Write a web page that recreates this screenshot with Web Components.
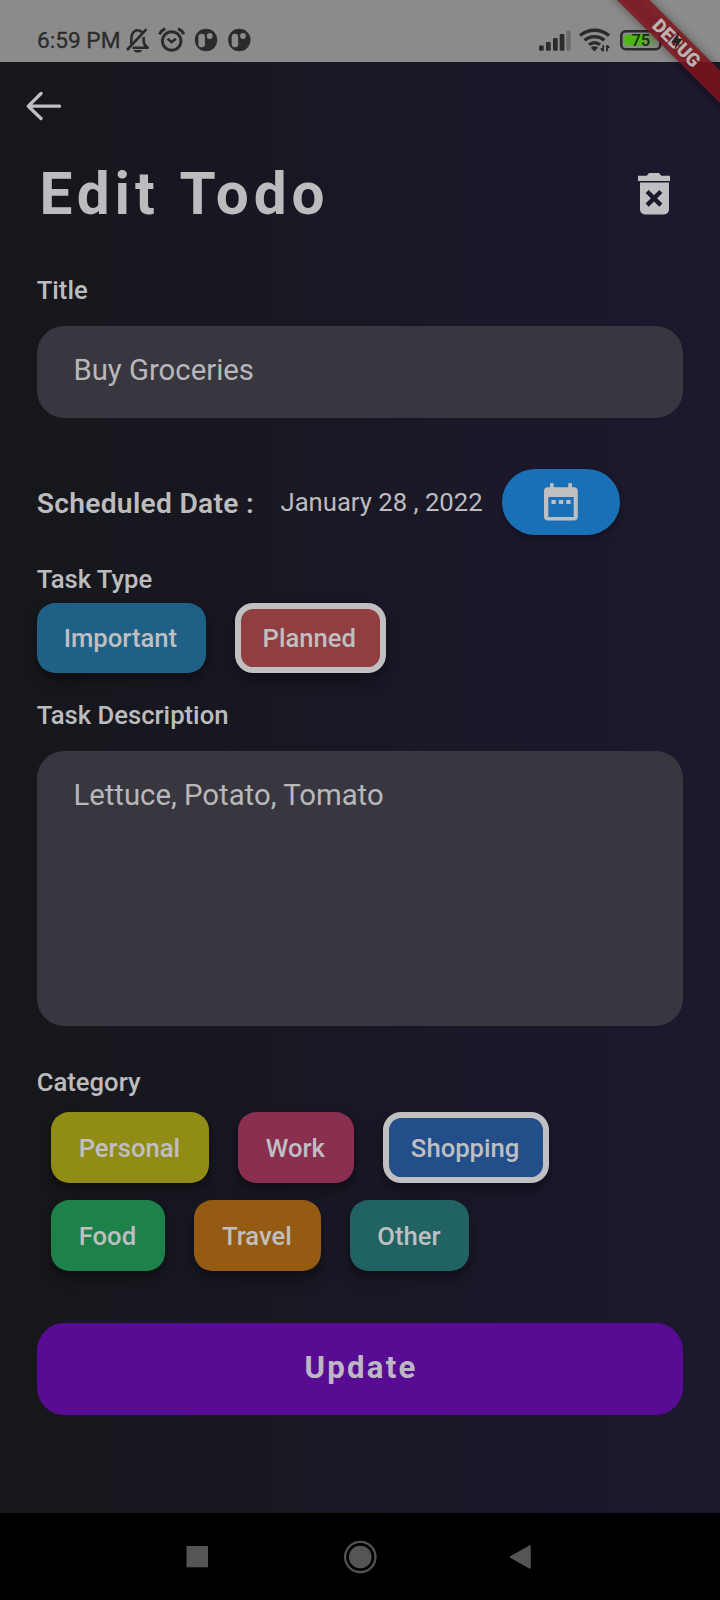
<!DOCTYPE html>
<html lang="en">
<head>
<meta charset="utf-8">
<title>Edit Todo</title>
<style>
html,body{margin:0;padding:0;background:#000}
body{width:720px;height:1600px;overflow:hidden;font-family:Roboto,"Liberation Sans",sans-serif;color:#bcbcbe}
</style>
</head>
<body>
<todo-screen></todo-screen>
<script>
function define(name, html) {
  const t = document.createElement('template');
  t.innerHTML = html;
  customElements.define(name, class extends HTMLElement {
    constructor() {
      super();
      this.attachShadow({mode: 'open'}).appendChild(t.content.cloneNode(true));
    }
  });
}

define('status-bar', `
<style>
:host{display:flex;height:62px;box-sizing:border-box;background:#8b8b8b;color:#2b2b2b;align-items:flex-start;padding:26px 0 0 37px}
.time{font-size:22.700px;line-height:30px;width:85px;white-space:nowrap;-webkit-text-stroke:.3px #2b2b2b}
svg{display:block;flex:none}
.left{margin-left:3px}
.right{margin-left:282px}
</style>
<span class="time">6:59 PM</span>
<svg class="left" width="127" height="28" viewBox="125 26 127 28" fill="none" stroke="#2b2b2b" stroke-width="2.600">
  <path d="M131.300 44V39c0-5 2.500-8.800 6.300-8.800c1.800 0 3.400.8 4.500 2.200M143.700 37v4.500c0 2.500 1.500 4.500 4 6.300h-15" stroke-linejoin="round"/>
  <path d="M127 50l19.500-20.800"/>
  <path d="M133.500 50h8.600c-.8 3.400-7.800 3.400-8.600 0z" fill="#2b2b2b" stroke="none"/>
  <circle cx="171.700" cy="41" r="9.300" stroke-width="2.900"/>
  <path d="M167.500 38.800l4.200 3.200 4.200-3.200" stroke-width="2.700"/>
  <path d="M159.300 34.200c1.500-2.600 3.400-4.400 6-5.500M184 34.200c-1.500-2.600-3.400-4.400-6-5.500" stroke-width="2.900"/>
  <g stroke="none">
    <circle cx="206" cy="40" r="11.200" fill="#2b2b2b"/>
    <rect x="198.400" y="33.700" width="6.500" height="13.600" rx="3" fill="#8b8b8b"/>
    <circle cx="209.700" cy="36" r="2.900" fill="#8b8b8b"/>
    <circle cx="239.300" cy="40" r="11.200" fill="#2b2b2b"/>
    <rect x="231.700" y="33.700" width="6.500" height="13.600" rx="3" fill="#8b8b8b"/>
    <circle cx="243" cy="36" r="2.900" fill="#8b8b8b"/>
  </g>
</svg>
<svg class="right" width="152" height="30" viewBox="534 26 152 30">
  <g fill="#2b2b2b">
    <rect x="539" y="45.500" width="4.700" height="5.300" rx="1"/>
    <rect x="546" y="42" width="4.700" height="8.800" rx="1"/>
    <rect x="553" y="38" width="4.700" height="12.800" rx="1"/>
    <rect x="559.700" y="34" width="4.700" height="16.800" rx="1"/>
    <rect x="566.300" y="30.700" width="4.400" height="20.100" rx="1" fill="#6c6c6c"/>
  </g>
  <g fill="none" stroke="#2b2b2b" stroke-width="3.300">
    <path d="M580 35.500c8.500-7 20.500-7 29 0"/>
    <path d="M584.600 40.300c6-4.900 13.800-4.900 19.800 0"/>
    <path d="M589 44.800c3.500-2.800 7.500-2.800 11 0"/>
  </g>
  <path d="M594.500 51.500l-3.700-3.800c2-1.900 5.300-1.900 7.300 0z" fill="#2b2b2b"/>
  <path d="M603.200 45v6.300M600.800 48.200l2.400 3M607 51.300v-6M609.300 48l-2.300-2.800" stroke="#2b2b2b" stroke-width="1.800" fill="none"/>
  <rect x="621.300" y="31.200" width="39" height="18" rx="4.500" fill="none" stroke="#2b2b2b" stroke-width="2.600"/>
  <path d="M626.500 34.500H644v11h-17.500a2 2 0 0 1-2-2v-7a2 2 0 0 1 2-2z" fill="#4db814"/>
  <path d="M644 34.500h11v11h-11z" fill="#76965f"/>
  <path d="M662.300 37c2 .5 2 6 0 6.500z" fill="#2b2b2b"/>
  <text x="640.800" y="46.200" text-anchor="middle" font-family="Roboto" font-weight="500" font-size="16.500" fill="#173006">75</text>
</svg>`);

define('debug-banner', `
<style>
:host{position:absolute;top:0;right:0;width:140px;height:140px;overflow:hidden;pointer-events:none}
svg{display:block}
</style>
<svg width="140" height="140" viewBox="580 0 140 140">
  <defs><filter id="b" x="-30%" y="-30%" width="160%" height="160%"><feGaussianBlur stdDeviation="5"/></filter></defs>
  <path d="M602-15L735 118V86L634-15z" fill="#000" opacity=".42" filter="url(#b)"/>
  <path d="M617 0L720 103V70.500L649.500 0z" fill="#84161d" fill-opacity=".82"/>
  <text transform="translate(676.800 42.800) rotate(45)" text-anchor="middle" y="6.800" font-family="Roboto" font-weight="900" font-size="18.700" textLength="59" fill="#b9b3b3">DEBUG</text>
  <path d="M679.500 31l-8.500 11.500 5 .8-1.800 7.200 8.300-11.500-4.500-.8z" fill="#2b2222"/>
</svg>`);

define('top-bar', `
<style>
:host{display:flex;height:88px;padding:27px 0 0 26px;box-sizing:border-box}
svg{display:block}
</style>
<svg width="38" height="34" viewBox="26 89 38 34" fill="none" stroke="#bfbfc1" stroke-width="3.300" stroke-linecap="round" stroke-linejoin="round">
  <path d="M59.500 106.200H28.300M41 93.500L28.300 106.200 41 118.500"/>
</svg>`);

define('page-heading', `
<style>
:host{display:flex;justify-content:space-between;height:86px;padding:8px 49px 0 39.500px;box-sizing:border-box}
h1{margin:0;padding-top:2px;font-size:58.500px;line-height:68px;font-weight:700;letter-spacing:4.900px;word-spacing:2px;white-space:nowrap;color:#bcbcbe}
svg{display:block;margin-top:14px}
</style>
<h1><slot></slot></h1>
<svg width="34" height="44" viewBox="637 172 34 44">
  <path d="M638 175.700h8.700l2.300-2.700h10l2.300 2.700h8.700v5.300h-32z" fill="#bfbfc1"/>
  <path d="M640 182.500h29v27a5 5 0 0 1-5 5h-19a5 5 0 0 1-5-5z" fill="#bfbfc1"/>
  <path d="M648.700 193l10.600 10.600M659.300 193l-10.600 10.600" stroke="#1b182b" stroke-width="4.400" stroke-linecap="square"/>
</svg>`);

define('field-label', `
<style>:host{display:block;font-size:25.670px;line-height:30px;font-weight:500;color:#bcbcbe;white-space:nowrap}</style><slot></slot>`);

define('text-field', `
<style>
:host{display:block;box-sizing:border-box;height:var(--h,91.500px);border-radius:27.500px;background:#383740;padding:26.500px 36.700px 0;font-size:29.330px;line-height:34px;color:#b8b8ba;white-space:nowrap}
</style><slot></slot>`);

define('date-row', `
<style>
:host{display:flex;align-items:center;height:66px}
.k{font-size:28.200px;font-weight:600;letter-spacing:.300px;width:243.800px;padding-top:2px}
.v{font-size:25.670px;width:222px}
.k,.v{white-space:nowrap}
button{all:unset;display:grid;place-items:center;width:117.500px;height:66px;border-radius:33px;background:#1a70b6;box-shadow:0 4px 6px rgba(0,0,0,.3)}
svg{display:block}
</style>
<span class="k"><slot name="label"></slot></span><span class="v"><slot></slot></span>
<button><svg width="34" height="38" viewBox="544 483 34 38">
  <path fill="#bfbfc1" fill-rule="evenodd" d="M550 483.300h3.700v4h14.600v-4h3.700v4h2a3.800 3.800 0 0 1 3.800 3.700v25.800a3.800 3.800 0 0 1-3.800 3.700h-26.200a3.800 3.800 0 0 1-3.800-3.700V491a3.800 3.800 0 0 1 3.800-3.700h2.200zM548.300 497v20h25.400v-20z"/>
  <path fill="#bfbfc1" d="M551.500 500h4.300v4h-4.300zM558.900 500h4.300v4h-4.300zM566.300 500h4.300v4h-4.300z"/>
</svg></button>`);

define('tag-chip', `
<style>
:host{display:flex;align-items:center;justify-content:center;box-sizing:border-box;width:var(--w);height:70.500px;padding-right:1.800px;border-radius:18.300px;background:var(--c);font-size:25.670px;font-weight:500;color:#bfbfc1;white-space:nowrap;box-shadow:0 9px 14px rgba(0,0,0,.28),0 3px 5px rgba(0,0,0,.1)}
:host([selected]){border:6px solid #c0bfc1}
</style><slot></slot>`);

define('chip-row', `<style>:host{display:flex;gap:29px}</style><slot></slot>`);

define('submit-button', `
<style>:host{display:flex;align-items:center;justify-content:center;height:92px;box-sizing:border-box;border-radius:27.500px;background:#580b93;font-size:31.200px;font-weight:700;letter-spacing:2.200px;color:#bdb7c3;padding:0 0 2px 2px}</style><slot></slot>`);

define('nav-bar', `
<style>:host{display:flex;align-items:center;height:87px;background:#000}svg{display:block}</style>
<svg width="720" height="87" viewBox="0 1513 720 87" fill="#555">
  <rect x="186.500" y="1546" width="21.500" height="21.300"/>
  <circle cx="360.300" cy="1557" r="11.300"/>
  <circle cx="360.300" cy="1557" r="15.200" fill="none" stroke="#555" stroke-width="2.200"/>
  <path d="M510.700 1557l19.300-11v22z" stroke="#555" stroke-width="1.500" stroke-linejoin="round"/>
</svg>`);

define('todo-screen', `
<style>
:host{display:flex;flex-direction:column;position:relative;width:720px;height:1600px;overflow:hidden}
main{flex:1;min-height:0;background:linear-gradient(90deg,#16171a 0,#17171f 18%,#191723 45%,#1b182b 75%,#1c182e 100%)}
form{display:flex;flex-direction:column;padding:0 36.700px}
</style>
<status-bar></status-bar>
<main>
  <top-bar></top-bar>
  <page-heading>Edit Todo</page-heading>
  <form>
    <field-label style="margin-top:38.500px">Title</field-label>
    <text-field style="margin-top:21.500px">Buy Groceries</text-field>
    <date-row style="margin-top:51.500px"><span slot="label">Scheduled Date :</span>January 28 , 2022</date-row>
    <field-label style="margin-top:29px">Task Type</field-label>
    <chip-row style="margin-top:8.500px">
      <tag-chip style="--c:#1f6087;--w:169.200px">Important</tag-chip>
      <tag-chip selected style="--c:#913e40;--w:150.700px">Planned</tag-chip>
    </chip-row>
    <field-label style="margin-top:27px">Task Description</field-label>
    <text-field style="margin-top:21px;--h:275px">Lettuce, Potato, Tomato</text-field>
    <field-label style="margin-top:41px">Category</field-label>
    <chip-row style="margin:15.300px 0 0 14.600px">
      <tag-chip style="--c:#908c16;--w:158px">Personal</tag-chip>
      <tag-chip style="--c:#8a2f50;--w:116px">Work</tag-chip>
      <tag-chip selected style="--c:#224f89;--w:165.500px">Shopping</tag-chip>
    </chip-row>
    <chip-row style="margin:17.500px 0 0 14.600px">
      <tag-chip style="--c:#1d824a;--w:114px">Food</tag-chip>
      <tag-chip style="--c:#955b13;--w:127px">Travel</tag-chip>
      <tag-chip style="--c:#216263;--w:119px">Other</tag-chip>
    </chip-row>
    <submit-button style="margin-top:52.200px">Update</submit-button>
  </form>
</main>
<nav-bar></nav-bar>
<debug-banner></debug-banner>`);
</script>
</body>
</html>
